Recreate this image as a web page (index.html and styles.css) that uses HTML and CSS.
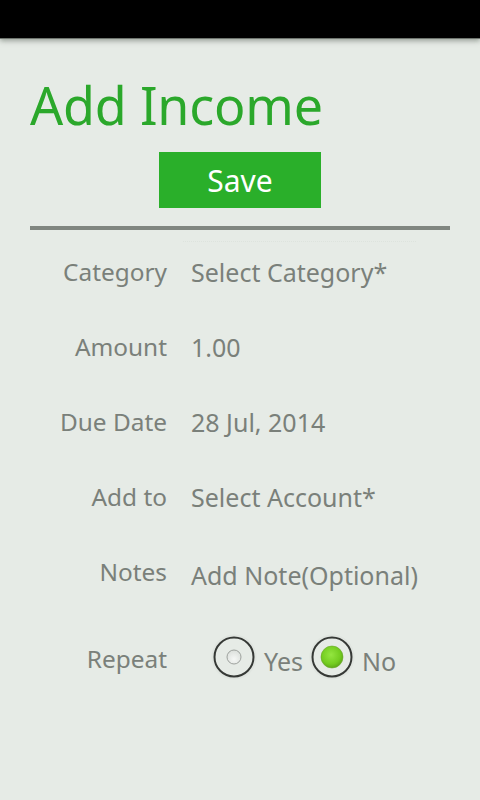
FILE: index.html
```html
<!DOCTYPE html>
<html>
<head>
<meta charset="utf-8">
<link rel="stylesheet" href="styles.css">
</head>
<body>
<div class="statusbar"></div>
<main class="content">
  <h1 class="title">Add Income</h1>
  <div class="save-wrap"><button class="save">Save</button></div>
  <div class="divider"></div>
  <div class="form">
    <div class="row">
      <div class="label">Category</div>
      <div class="value spinner">Select Category*</div>
    </div>
    <div class="row">
      <div class="label">Amount</div>
      <div class="value">1.00</div>
    </div>
    <div class="row">
      <div class="label">Due Date</div>
      <div class="value">28 Jul, 2014</div>
    </div>
    <div class="row">
      <div class="label">Add to</div>
      <div class="value">Select Account*</div>
    </div>
    <div class="row">
      <div class="label">Notes</div>
      <div class="value note">Add Note(Optional)</div>
    </div>
    <div class="row repeat">
      <div class="label">Repeat</div>
      <div class="radios">
        <label class="radio">
          <svg class="dot" width="46" height="46" viewBox="0 0 46 46">
            <defs>
              <radialGradient id="offg" cx="50%" cy="65%" r="60%">
                <stop offset="0" stop-color="#f6f8f6"/>
                <stop offset="1" stop-color="#dde1dd"/>
              </radialGradient>
            </defs>
            <circle cx="23" cy="23" r="22.5" fill="#dde3dd" opacity="0.7"/>
            <circle cx="23" cy="23" r="19.5" fill="#e6ebe6" stroke="#363936" stroke-width="2"/>
            <circle cx="23" cy="23" r="7" fill="url(#offg)" stroke="#9ea29e" stroke-width="1"/>
          </svg>
          <span class="rtext">Yes</span>
        </label>
        <label class="radio">
          <svg class="dot" width="46" height="46" viewBox="0 0 46 46">
            <defs>
              <radialGradient id="ong" cx="45%" cy="40%" r="60%">
                <stop offset="0" stop-color="#94e640"/>
                <stop offset="0.7" stop-color="#74cd20"/>
                <stop offset="1" stop-color="#5ea918"/>
              </radialGradient>
            </defs>
            <circle cx="23" cy="23" r="22.5" fill="#dde3dd" opacity="0.7"/>
            <circle cx="23" cy="23" r="19.5" fill="#e6ebe6" stroke="#363936" stroke-width="2"/>
            <circle cx="23" cy="23" r="11" fill="url(#ong)" stroke="#6aa82a" stroke-width="0.6"/>
          </svg>
          <span class="rtext">No</span>
        </label>
      </div>
    </div>
  </div>
</main>
</body>
</html>
```

FILE: styles.css
```css
* { box-sizing: border-box; }
html, body { margin: 0; padding: 0; }
body {
  width: 480px;
  height: 800px;
  background: #e6ebe6;
  font-family: "Noto Sans", "Open Sans", sans-serif;
  overflow: hidden;
}
.statusbar {
  height: 38px;
  background: #000;
  box-shadow: 0 1px 0 #6f756f, 0 3px 5px rgba(90, 100, 90, 0.55);
  position: relative;
}
.content {
  padding: 0 30px;
}
.title {
  margin: 0;
  padding-top: 32px;
  font-weight: 400;
  font-size: 52px;
  line-height: 70px;
  height: 114px;
  color: #2ba82b;
  letter-spacing: -0.2px;
}
.save-wrap {
  display: flex;
  justify-content: center;
}
.save {
  width: 162px;
  height: 56px;
  border: 0;
  background: #2aaf2a;
  color: #fff;
  font-family: inherit;
  font-size: 30px;
  padding: 0;
}
.divider {
  height: 4px;
  background: #808680;
  margin-top: 18px;
}
.form {
  margin-top: 4px;
}
.row {
  display: grid;
  grid-template-columns: 137px 1fr;
  column-gap: 24px;
  align-items: center;
  height: 75px;
  font-size: 25px;
  color: #7a807a;
}
.label {
  text-align: right;
  font-size: 24.4px;
}
.value {
  position: relative;
}
.spinner::before {
  content: "";
  position: absolute;
  left: -8px;
  width: 233px;
  top: -14px;
  border-top: 1px dotted #dde3dd;
}
.note {
  top: 3px;
}
.repeat {
  margin-top: 12px;
}
.radios {
  display: flex;
  align-items: center;
  margin-left: 20px;
  gap: 6px;
  position: relative;
  top: -2px;
}
.radio {
  display: flex;
  align-items: center;
}
.dot {
  display: block;
  flex: none;
}
.rtext {
  margin-left: 7px;
  position: relative;
  top: 4px;
}
```
